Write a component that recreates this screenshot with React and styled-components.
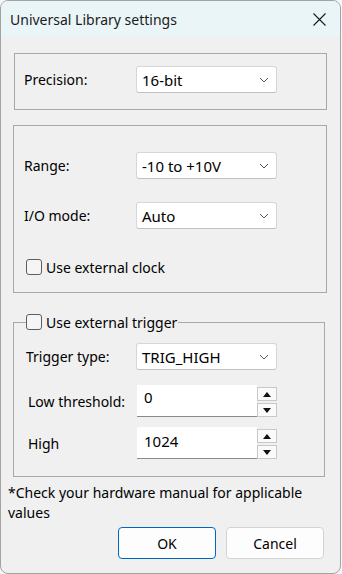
import React from 'react';
import styled, { createGlobalStyle } from 'styled-components';

const Global = createGlobalStyle`
  html, body { margin: 0; padding: 0; background: #f7f7f7; }
  body { font-family: "Noto Sans", "Open Sans", sans-serif; }
  #root { width: 342px; height: 574px; }
  * { box-sizing: border-box; }
`;

const Window = styled.div`
  width: 341px;
  height: 574px;
  border: 1px solid #a3a3a3;
  border-radius: 8px;
  overflow: hidden;
  background: #f0f0f0;
  display: flex;
  flex-direction: column;
  font-size: 14px;
  color: #000;
`;

const TitleBar = styled.div`
  height: 36px;
  flex: none;
  background: #eaf5f8;
  display: flex;
  align-items: center;
  justify-content: space-between;
  padding: 0 14px 0 9px;
`;

const Title = styled.span`
  font-size: 14px;
  color: #1b1b1b;
`;

const Body = styled.div`
  flex: 1;
  display: flex;
  flex-direction: column;
  padding: 16px 13px 0 6px;
`;

const Group = styled.div`
  border: 1px solid #a8a8a8;
  margin-left: ${p => p.$ml || 6}px;
  margin-top: ${p => p.$mt || 0}px;
  padding: ${p => p.$pad};
  display: flex;
  flex-direction: column;
`;

const Fieldset = styled.fieldset`
  margin: 20px 2px 0 6px;
  min-width: 0;
  border: 1px solid #a8a8a8;
  padding: 12px 0 17px 12px;
  display: flex;
  flex-direction: column;
`;

const Legend = styled.legend`
  padding: 0 1px 0 0;
  margin: 0;
  height: 18px;
  display: flex;
  align-items: center;
`;

const Row = styled.div`
  display: grid;
  grid-template-columns: ${p => p.$label || 112}px auto;
  align-items: center;
  margin-top: ${p => p.$mt || 0}px;
`;

const Label = styled.span`
  padding-left: ${p => p.$indent || 0}px;
  white-space: nowrap;
`;

const Combo = styled.div`
  width: 141px;
  height: 27px;
  background: #fff;
  border: 1px solid #d6d6d6;
  border-bottom-color: #c2c2c2;
  border-radius: 3px;
  display: flex;
  align-items: center;
  justify-content: space-between;
  padding: 0 7px 0 5px;
  font-size: 15px;
`;

const Spin = styled.div`
  display: flex;
  width: 141px;
  height: 32px;
  margin-left: 1px;
`;

const Edit = styled.div`
  width: 120px;
  height: 32px;
  background: #fff;
  border-bottom: 1px solid #8a8a8a;
  padding: ${p => p.$pt || 4}px 0 0 7px;
  font-size: 15px;
`;

const SpinButtons = styled.div`
  display: flex;
  flex-direction: column;
  gap: 2px;
  padding-top: 2px;
`;

const SpinButton = styled.div`
  width: 20px;
  height: 14px;
  border: 1px solid #c8c8c8;
  background: #fafafa;
  display: flex;
  align-items: center;
  justify-content: center;
`;

const CheckRow = styled.label`
  display: flex;
  align-items: center;
  gap: 4px;
  height: 20px;
  margin-left: ${p => p.$ml || 0}px;
  margin-top: ${p => p.$mt || 0}px;
`;

const Box = styled.span`
  width: 16px;
  height: 16px;
  border: 1px solid #5e5e5e;
  border-radius: 3px;
  background: #f5f5f5;
  flex: none;
`;

const Note = styled.p`
  margin: 6px 0 0 1px;
  line-height: 20px;
  font-size: 14px;
`;

const ButtonRow = styled.div`
  display: flex;
  justify-content: flex-end;
  gap: 10px;
  margin: 4px 3px 0 0;
`;

const Button = styled.button`
  width: 98px;
  height: 32px;
  border-radius: 4px;
  border: 1px solid ${p => (p.$primary ? '#0067c0' : '#d3d3d3')};
  background: #fdfdfd;
  font-family: inherit;
  font-size: 14px;
  color: #000;
  padding: 0;
`;

const Chevron = () => (
  <svg width="10" height="6" viewBox="0 0 10 6">
    <path d="M1 1 L5 5 L9 1" fill="none" stroke="#555" strokeWidth="1" />
  </svg>
);

const Close = () => (
  <svg width="13" height="13" viewBox="0 0 13 13">
    <path d="M0.5 0.5 L12.5 12.5 M12.5 0.5 L0.5 12.5" stroke="#1a1a1a" strokeWidth="1.1" />
  </svg>
);

const Tri = ({ up }) => (
  <svg width="8" height="5" viewBox="0 0 8 5">
    <path d={up ? 'M0 5 L4 0 L8 5 Z' : 'M0 0 L8 0 L4 5 Z'} fill="#111" />
  </svg>
);

const ComboBox = ({ value }) => (
  <Combo>
    <span>{value}</span>
    <Chevron />
  </Combo>
);

const Spinner = ({ value, pt }) => (
  <Spin>
    <Edit $pt={pt}>{value}</Edit>
    <SpinButtons>
      <SpinButton><Tri up /></SpinButton>
      <SpinButton><Tri /></SpinButton>
    </SpinButtons>
  </Spin>
);

export default function App() {
  return (
    <>
      <Global />
      <Window>
        <TitleBar>
          <Title>Universal Library settings</Title>
          <Close />
        </TitleBar>
        <Body>
          <Group $ml={7} $pad="12px 0 16px 9px">
            <Row>
              <Label>Precision:</Label>
              <ComboBox value="16-bit" />
            </Row>
          </Group>
          <Group $mt={15} $pad="26px 0 15px 10px">
            <Row>
              <Label>Range:</Label>
              <ComboBox value="-10 to +10V" />
            </Row>
            <Row $mt={23}>
              <Label>I/O mode:</Label>
              <ComboBox value="Auto" />
            </Row>
            <CheckRow $mt={28} $ml={2}>
              <Box />
              <span>Use external clock</span>
            </CheckRow>
          </Group>
          <Fieldset>
            <Legend>
              <CheckRow>
                <Box />
                <span>Use external trigger</span>
              </CheckRow>
            </Legend>
            <Row $label={110}>
              <Label>Trigger type:</Label>
              <ComboBox value="TRIG_HIGH" />
            </Row>
            <Row $label={110} $mt={15}>
              <Label $indent={2}>Low threshold:</Label>
              <Spinner value="0" pt={2} />
            </Row>
            <Row $label={110} $mt={10}>
              <Label $indent={2}>High</Label>
              <Spinner value="1024" pt={4} />
            </Row>
          </Fieldset>
          <Note>*Check your hardware manual for applicable values</Note>
          <ButtonRow>
            <Button $primary>OK</Button>
            <Button>Cancel</Button>
          </ButtonRow>
        </Body>
      </Window>
    </>
  );
}
